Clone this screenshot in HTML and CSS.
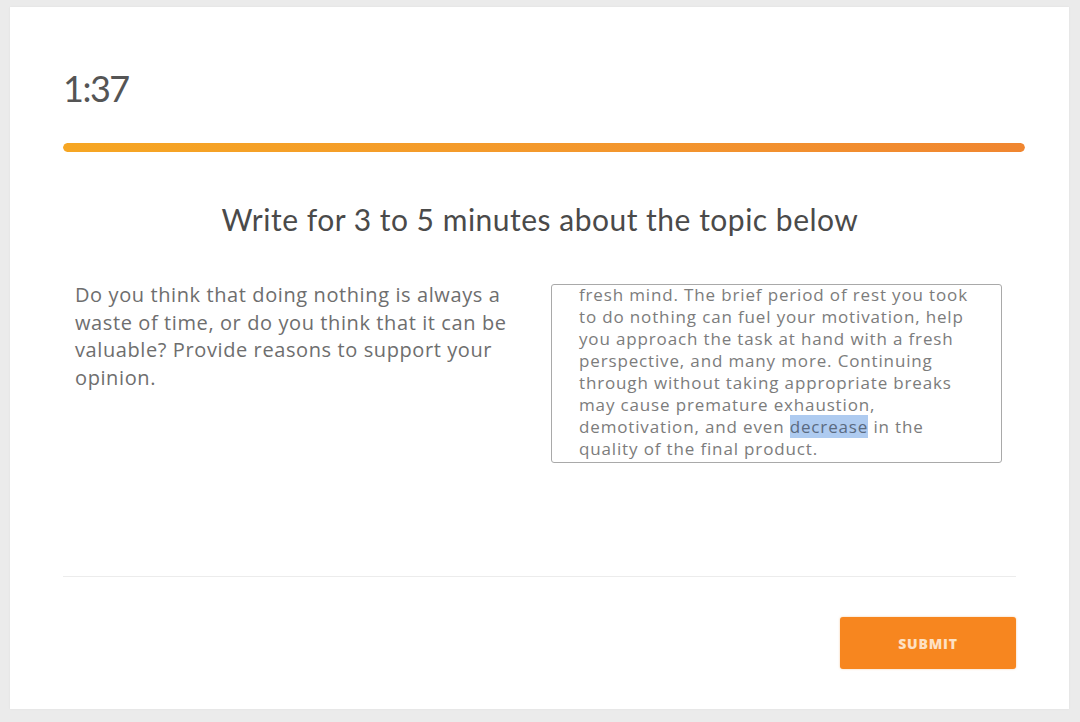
FILE: index.html
```html
<!DOCTYPE html>
<html lang="en">
<head>
<meta charset="utf-8">
<title>Writing sample</title>
<link rel="stylesheet" href="styles.css">
</head>
<body>
<main class="card">
  <div class="timer">1:37</div>
  <div class="progress"><div class="progress-fill"></div></div>
  <h1 class="title">Write for 3 to 5 minutes about the topic below</h1>
  <section class="task">
    <p class="prompt">Do you think that doing nothing is always a waste of time, or do you think that it can be valuable? Provide reasons to support your opinion.</p>
    <div class="answer">
      <p class="answer-text">fresh mind. The brief period of rest you took<br>to do nothing can fuel your motivation, help<br>you approach the task at hand with a fresh<br>perspective, and many more. Continuing<br>through without taking appropriate breaks<br>may cause premature exhaustion,<br>demotivation, and even <span class="sel">decrease</span> in the<br>quality of the final product.</p>
    </div>
  </section>
  <hr class="divider">
  <div class="actions">
    <button class="submit" type="button">SUBMIT</button>
  </div>
</main>
</body>
</html>
```

FILE: styles.css
```css
html, body {
  margin: 0;
  padding: 0;
}
body {
  background: #ebebeb;
  padding: 7px 11px 13px 10px;
  font-family: "Open Sans", "Noto Sans", sans-serif;
}
.card {
  background: #fff;
  height: 702px;
  box-sizing: border-box;
  padding: 61px 52px 0 53px;
  display: flex;
  flex-direction: column;
  box-shadow: 0 0 2px rgba(0, 0, 0, 0.06);
}
.timer {
  font-family: Lato, "Open Sans", sans-serif;
  font-size: 36px;
  line-height: 40px;
  color: #555;
  letter-spacing: -1.5px;
}
.progress {
  margin-top: 35px;
  height: 9px;
  width: 962px;
  border-radius: 5px;
  overflow: hidden;
}
.progress-fill {
  height: 100%;
  width: 100%;
  background: linear-gradient(90deg, #f6a623, #f3962e 60%, #f08630);
  border-radius: 5px;
}
.title {
  margin: 47px 0 0 0;
  font-family: Lato, "Open Sans", sans-serif;
  font-weight: 400;
  font-size: 30px;
  line-height: 40px;
  letter-spacing: 0.5px;
  color: #4a4a4a;
  text-align: center;
}
.task {
  display: flex;
  align-items: flex-start;
  margin-top: 42px;
  padding-left: 12px;
}
.prompt {
  margin: 0;
  flex: 0 0 470px;
  font-size: 20px;
  line-height: 27.5px;
  letter-spacing: 0.6px;
  color: #6e6e6e;
}
.answer {
  margin: 3px 0 0 6px;
  width: 451px;
  height: 179px;
  box-sizing: border-box;
  border: 1px solid #a9a9a9;
  border-radius: 3px;
  overflow: hidden;
  display: flex;
  flex-direction: column;
  justify-content: flex-end;
  padding: 0 10px 0 27px;
}
.answer-text {
  margin: 0 0 2px 0;
  font-size: 17px;
  line-height: 22px;
  letter-spacing: 0.85px;
  color: #7c7c7c;
  white-space: nowrap;
}
.sel {
  background: #aecbf0;
  color: #5a6a80;
}
.divider {
  margin: 113px 0 0 0;
  width: 953px;
  border: 0;
  border-top: 1px solid #ececec;
  height: 0;
}
.actions {
  display: flex;
  justify-content: flex-end;
  margin-top: 40px;
  width: 953px;
}
.submit {
  width: 176px;
  height: 52px;
  border: 0;
  border-radius: 3px;
  background: #f7861f;
  color: #fde1c4;
  font-family: "Open Sans", sans-serif;
  font-weight: 800;
  font-size: 14px;
  letter-spacing: 0.8px;
  box-shadow: 0 0 2px rgba(240, 140, 40, 0.5);
}
```
